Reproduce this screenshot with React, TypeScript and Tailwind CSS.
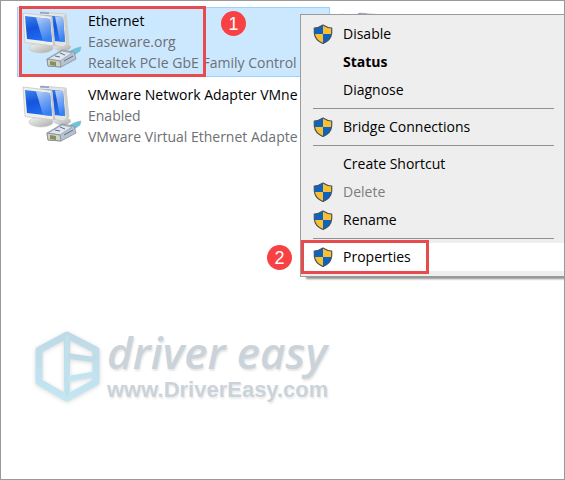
import clsx from 'clsx';

type Adapter = {
  name: string;
  status: string;
  device: string;
  selected?: boolean;
};

type MenuEntry = {
  label: string;
  shield?: boolean;
  bold?: boolean;
  disabled?: boolean;
  active?: boolean;
};

const adapters: Adapter[] = [
  { name: 'Ethernet', status: 'Easeware.org', device: 'Realtek PCIe GbE Family Control', selected: true },
  { name: 'VMware Network Adapter VMne', status: 'Enabled', device: 'VMware Virtual Ethernet Adapte' },
];

const menuGroups: MenuEntry[][] = [
  [{ label: 'Disable', shield: true }, { label: 'Status', bold: true }, { label: 'Diagnose' }],
  [{ label: 'Bridge Connections', shield: true }],
  [
    { label: 'Create Shortcut' },
    { label: 'Delete', shield: true, disabled: true },
    { label: 'Rename', shield: true },
  ],
  [{ label: 'Properties', shield: true, active: true }],
];

function AdapterIcon() {
  return (
    <svg className="w-[60px] h-[60px] shrink-0" viewBox="0 0 60 60" fill="none" aria-hidden="true">
      <defs>
        <linearGradient id="screen" x1="0" y1="0" x2="0.3" y2="1">
          <stop offset="0" stopColor="#3f86ee" />
          <stop offset="0.5" stopColor="#1455dc" />
          <stop offset="1" stopColor="#1f6cf0" />
        </linearGradient>
        <linearGradient id="glare" x1="0" y1="0" x2="0.4" y2="1">
          <stop offset="0" stopColor="#d8e8fd" />
          <stop offset="1" stopColor="#3f86f2" />
        </linearGradient>
        <linearGradient id="stand" x1="0" y1="0" x2="1" y2="1">
          <stop offset="0" stopColor="#f6f6f4" />
          <stop offset="1" stopColor="#a9aaa8" />
        </linearGradient>
      </defs>
      {/* back monitor */}
      <ellipse cx="40" cy="37" rx="9" ry="4" fill="url(#stand)" />
      <path d="M19 2 44 4 47 33 41 37 19 33Z" fill="#e4e4e0" stroke="#c6c8c8" strokeWidth="0.8" />
      <path d="M18 2 27 2.500 27 4 18 3.500Z" fill="#8e9cc4" />
      <path d="M21 5 41 7 43 32 21 30Z" fill="url(#screen)" />
      <path d="M33 6.500 41 7 43 32 38 32Z" fill="url(#glare)" opacity="0.85" />
      <path d="M44 4 47 33 44 35 42 6Z" fill="#cfd0cd" />
      {/* front monitor */}
      <path d="M14 31h9l2 8H13Z" fill="#c9cac7" />
      <ellipse cx="19" cy="38" rx="12" ry="5" fill="url(#stand)" stroke="#c6c7c5" strokeWidth="0.6" />
      <path d="M1 3 30 6.500 33 36 3 32.500Z" fill="#eeeeea" stroke="#c6c8c8" strokeWidth="0.8" />
      <path d="M30 6.500 33 36 31 36 28.500 8Z" fill="#c8c9c6" />
      <path d="M3 6 28 9 30 32 5 29Z" fill="url(#screen)" />
      <path d="M14 7.300 28 9 30 32 21 31Z" fill="url(#glare)" opacity="0.8" />
      {/* network plug */}
      <path d="M47 42c4-3 7-4 12-5l-1 4-7 5Z" fill="#6cc3dc" stroke="#7fb6c8" strokeWidth="0.6" />
      <path d="M25 49 40 40 52 42 54 49 39 57 26 56Z" fill="#b7c1cf" stroke="#8592a3" strokeWidth="0.8" />
      <path d="M26 49 40 41 50 43 38 51Z" fill="#dfe6ee" stroke="#8d9aa8" strokeWidth="0.7" />
      <path d="M25 49 38 51 39 57 26 56Z" fill="#cdd4c8" stroke="#7c8894" strokeWidth="0.8" />
      <path d="M28 51 34 52 34 56 28 55Z" fill="#918b57" />
      <path d="M33 46 38 47M38 43 43 45M42 51 51 46" stroke="#5d6f88" strokeWidth="1" />
    </svg>
  );
}

function ShieldIcon() {
  return (
    <svg className="w-5 h-5 shrink-0" viewBox="0 0 20 20" fill="none" aria-hidden="true">
      <path d="M10 1C7 3 4 4 1.500 4v5C2 14 5 17.500 10 19.500Z" fill="#0b64c0" />
      <path d="M10 1c3 2 6 3 8.500 3v5C18 14 15 17.500 10 19.500Z" fill="#fdbf32" />
      <path d="M1.500 10H10v9.500C5 17.500 2 14.500 1.500 10Z" fill="#fdbf32" />
      <path d="M10 10h8.500C18 14.500 15 17.500 10 19.500Z" fill="#0b64c0" />
      <path
        d="M10 1C7 3 4 4 1.300 4v5C1.800 14 5 17.500 10 19.500 15 17.500 18.200 14 18.700 9V4C16 4 13 3 10 1Z"
        stroke="#48525c"
        strokeWidth="1.200"
        strokeLinejoin="round"
      />
    </svg>
  );
}

function StepBadge({ step, className }: { step: number; className: string }) {
  return (
    <span
      className={clsx(
        "absolute z-20 flex size-[25px] items-center justify-center rounded-full bg-[#f94144] font-['Liberation_Sans',sans-serif] text-lg leading-none text-white",
        className,
      )}
    >
      {step}
    </span>
  );
}

function AdapterItem({ adapter }: { adapter: Adapter }) {
  return (
    <button
      type="button"
      className={clsx(
        'relative flex h-[70px] w-full items-start border pl-1 text-left text-sm leading-[21px]',
        adapter.selected ? 'border-[#99d1ff] bg-[#cce8ff]' : 'border-transparent',
      )}
    >
      <span className="pt-0.5">
        <AdapterIcon />
      </span>
      <span className="block min-w-0 flex-1 overflow-hidden whitespace-nowrap pl-1.5 pt-0.5 text-[#6d7074]">
        <span className="block text-black">{adapter.name}</span>
        <span className="block">{adapter.status}</span>
        <span className="block">{adapter.device}</span>
      </span>
      {adapter.selected && (
        <>
          <span className="absolute -top-0.5 left-px h-[71px] w-[187px] border-3 border-[#e84b4e]" />
          <StepBadge step={1} className="left-[203px] top-[3px]" />
        </>
      )}
    </button>
  );
}

function ContextMenu() {
  return (
    <div
      role="menu"
      className="absolute left-[299px] right-0 top-[13px] z-10 border border-r-0 border-[#9b9b9b] bg-[#eeeeee] py-[5px] text-sm shadow-[5px_3px_2px_-1px_#8f8f8f]"
    >
      {menuGroups.map((group, i) => (
        <div key={i} role="group">
          {i > 0 && <hr className="my-1 ml-3 mr-2.5 border-[#919191]" />}
          {group.map((entry) => (
            <button
              key={entry.label}
              type="button"
              role="menuitem"
              disabled={entry.disabled}
              className={clsx(
                'relative flex h-7 w-full items-center gap-2.5 pl-3 text-left',
                entry.bold && 'font-bold',
                entry.active && 'bg-white',
                entry.disabled ? 'text-[#7d7d7d]' : 'text-black',
              )}
            >
              <span className="w-5 shrink-0">{entry.shield && <ShieldIcon />}</span>
              {entry.label}
              {entry.active && (
                <>
                  <span className="absolute -top-[3px] left-0 h-[34px] w-32 border-3 border-[#e84b4e]" />
                  <StepBadge step={2} className="-left-[34px] top-0.5" />
                </>
              )}
            </button>
          ))}
        </div>
      ))}
    </div>
  );
}

function Watermark() {
  return (
    <div className="flex items-start gap-[7px] pl-[34px]">
      <svg className="h-[76px] w-[65px] shrink-0 drop-shadow-sm" viewBox="0 0 65 76" fill="none" aria-hidden="true">
        <defs>
          <linearGradient id="hex" x1="0" y1="0" x2="0" y2="1">
            <stop offset="0" stopColor="#bfdae6" />
            <stop offset="1" stopColor="#c2e6f2" />
          </linearGradient>
        </defs>
        <g stroke="url(#hex)" strokeLinejoin="round">
          <path d="M32 5 61 20v32L32 68 4 52V20Z" strokeWidth="7" />
          <path d="M29.500 5h5v62h-5Z" fill="#c0e0eb" strokeWidth="1" />
          <path d="M33 26 61 30M33 49 61 44" strokeWidth="5.500" />
        </g>
      </svg>
      <div className="whitespace-nowrap font-bold text-[#cbd3da]">
        <div className="text-[44px] font-semibold italic leading-[44px] [text-shadow:1px_2px_2px_#e6e6e6]">driver easy</div>
        <div className="pt-1 font-['Liberation_Sans',Arial,sans-serif] text-[22px] leading-6 [text-shadow:1px_2px_2px_#ececec]">
          www.DriverEasy.com
        </div>
      </div>
    </div>
  );
}

export default function App() {
  return (
    <main className="relative flex min-h-screen flex-col overflow-hidden border border-[#9a9a9a] bg-white pb-[73px] font-['Open_Sans','Segoe_UI',sans-serif]">
      <div className="flex gap-1 pl-4 pt-1.5">
        <div className="flex w-[313px] shrink-0 flex-col gap-1">
          {adapters.map((adapter) => (
            <AdapterItem key={adapter.name} adapter={adapter} />
          ))}
        </div>
        <div className="pl-1.5 pt-1">
          <AdapterIcon />
        </div>
      </div>
      <ContextMenu />
      <div className="mt-auto">
        <Watermark />
      </div>
    </main>
  );
}
